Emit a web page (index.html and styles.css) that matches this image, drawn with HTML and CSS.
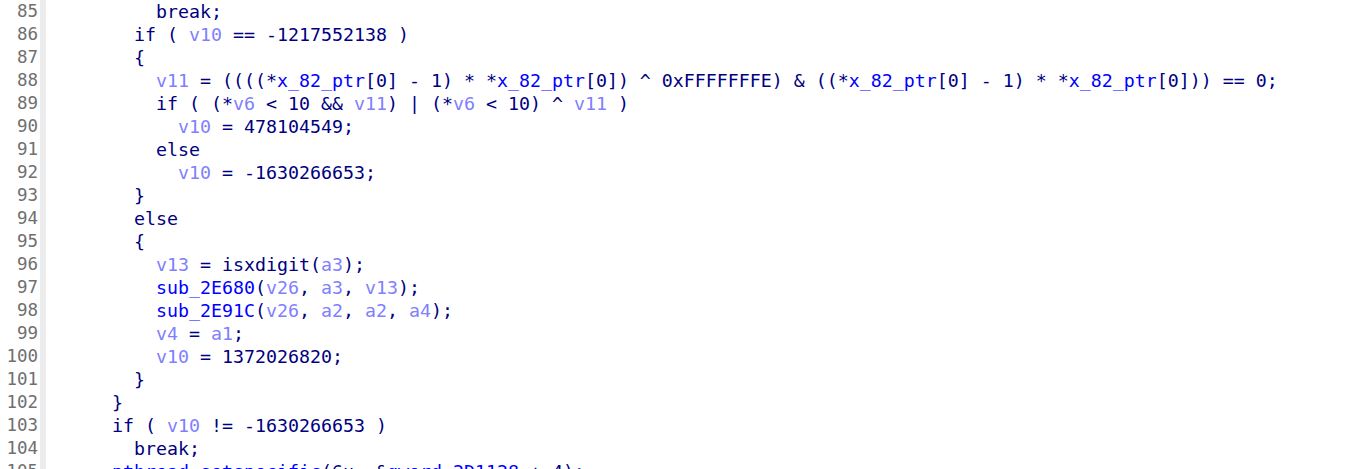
FILE: index.html
```html
<!DOCTYPE html>
<html>
<head>
<meta charset="utf-8">
<link rel="stylesheet" href="styles.css">
</head>
<body>
<div class="view">
  <div class="gutter">
    <div>85</div><div>86</div><div>87</div><div>88</div><div>89</div><div>90</div><div>91</div><div>92</div><div>93</div><div>94</div><div>95</div><div>96</div><div>97</div><div>98</div><div>99</div><div>100</div><div>101</div><div>102</div><div>103</div><div>104</div><div>105</div>
  </div>
  <div class="sep"></div>
  <pre class="code"><div>          break;</div><div>        if ( <span class="v">v10</span> == -1217552138 )</div><div>        {</div><div>          <span class="v">v11</span> = ((((*<span class="g">x_82_ptr</span>[0] - 1) * *<span class="g">x_82_ptr</span>[0]) ^ 0xFFFFFFFE) &amp; ((*<span class="g">x_82_ptr</span>[0] - 1) * *<span class="g">x_82_ptr</span>[0])) == 0;</div><div>          if ( (*<span class="v">v6</span> &lt; 10 &amp;&amp; <span class="v">v11</span>) | (*<span class="v">v6</span> &lt; 10) ^ <span class="v">v11</span> )</div><div>            <span class="v">v10</span> = 478104549;</div><div>          else</div><div>            <span class="v">v10</span> = -1630266653;</div><div>        }</div><div>        else</div><div>        {</div><div>          <span class="v">v13</span> = isxdigit(<span class="v">a3</span>);</div><div>          <span class="g">sub_2E680</span>(<span class="v">v26</span>, <span class="v">a3</span>, <span class="v">v13</span>);</div><div>          <span class="g">sub_2E91C</span>(<span class="v">v26</span>, <span class="v">a2</span>, <span class="v">a2</span>, <span class="v">a4</span>);</div><div>          <span class="v">v4</span> = <span class="v">a1</span>;</div><div>          <span class="v">v10</span> = 1372026820;</div><div>        }</div><div>      }</div><div>      if ( <span class="v">v10</span> != -1630266653 )</div><div>        break;</div><div>      <span class="g">pthread_setspecific</span>(6u, &amp;<span class="g">qword_2D1128</span> + 4);</div></pre>
</div>
</body>
</html>
```

FILE: styles.css
```css
html, body {
  margin: 0;
  padding: 0;
  background: #ffffff;
}
.view {
  display: flex;
  height: 469px;
  overflow: hidden;
  font-family: "DejaVu Sans Mono", "Liberation Mono", monospace;
  font-size: 18.27px;
  line-height: 23px;
}
.gutter {
  width: 38px;
  text-align: right;
  color: #6f6f6f;
  flex: none;
  font-size: 17.5px;
}
.sep {
  width: 6px;
  margin-left: 2px;
  background: #ececec;
  flex: none;
  height: 100%;
}
.code {
  margin: 0;
  font: inherit;
  color: #000080;
  white-space: pre;
}
.v {
  color: #8080ff;
}
.g {
  color: #0000ff;
}
```
